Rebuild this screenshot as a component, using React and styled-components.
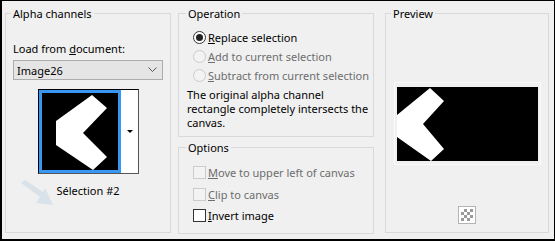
import React from 'react';
import styled, { createGlobalStyle } from 'styled-components';

const GlobalStyle = createGlobalStyle`
  body {
    margin: 0;
    background: #f0f0f0;
    font-family: "Noto Sans", "Open Sans", sans-serif;
    font-size: 11px;
    color: #000;
  }
`;

const Frame = styled.div`
  width: 555px;
  height: 241px;
  box-sizing: border-box;
  border-style: solid;
  border-color: #000;
  border-width: 1px 1px 2px 2px;
  background: #f0f0f0;
  padding: 5px 0 0 3px;
  display: flex;
  align-items: flex-start;
`;

const Column = styled.div`
  display: flex;
  flex-direction: column;
  gap: 3px;
  margin-left: ${p => p.$left || 0}px;
`;

const Group = styled.fieldset`
  box-sizing: border-box;
  margin: 0 0 0 ${p => p.$left || 0}px;
  min-width: 0;
  width: ${p => p.$w}px;
  height: ${p => p.$h}px;
  border: 1px solid #d9d9d9;
  padding: 0 7px;
  position: relative;
`;

const Legend = styled.legend`
  padding: 0 2px;
  margin-left: ${p => p.$offset || 0}px;
  line-height: 15px;
`;

const Stack = styled.div`
  display: flex;
  flex-direction: column;
  align-items: ${p => p.$center ? 'center' : 'stretch'};
  padding-top: ${p => p.$top || 0}px;
`;

const FieldLabel = styled.div`
  line-height: 15px;
`;

const Select = styled.div`
  margin-top: 4px;
  height: 20px;
  box-sizing: border-box;
  border: 1px solid #acacac;
  background: #e5e5e5;
  display: flex;
  align-items: center;
  justify-content: space-between;
  padding: 0 5px 0 3px;
  line-height: 15px;
`;

const ThumbFrame = styled.div`
  margin: 9px 0 0 25px;
  width: 101px;
  height: 85px;
  box-sizing: border-box;
  border: 1px solid #555;
  border-color: #000 #555 #555 #000;
  display: flex;
`;

const ThumbImage = styled.div`
  width: 82px;
  height: 83px;
  box-sizing: border-box;
  border: 3px solid #3797f2;
  background: #000;
  display: flex;
`;

const DropButton = styled.div`
  flex: 1;
  background: #fff;
  display: flex;
  align-items: center;
  justify-content: center;
`;

const Triangle = styled.div`
  width: 0;
  height: 0;
  border-left: 3px solid transparent;
  border-right: 3px solid transparent;
  border-top: 3px solid #000;
`;

const Caption = styled.div`
  margin-top: 9px;
  line-height: 15px;
  text-align: center;
`;

const Pointer = styled.svg`
  position: absolute;
  left: 13px;
  top: 158px;
`;

const Row = styled.div`
  height: ${p => p.$h}px;
  display: flex;
  align-items: center;
  margin-left: 7px;
  line-height: 15px;
  white-space: nowrap;
  color: ${p => p.$disabled ? '#6d6d6d' : '#000'};
`;

const Radio = styled.span`
  flex: none;
  width: 13px;
  height: 13px;
  box-sizing: border-box;
  border-radius: 50%;
  border: 1px solid ${p => p.$disabled ? '#cbcbcb' : '#333'};
  background: ${p => p.$disabled ? '#f3f3f3' : '#fff'};
  margin-right: 2px;
  display: flex;
  align-items: center;
  justify-content: center;
  &::after {
    content: '';
    display: ${p => p.$checked ? 'block' : 'none'};
    width: 7px;
    height: 7px;
    border-radius: 50%;
    background: #222;
  }
`;

const Check = styled.span`
  flex: none;
  width: 13px;
  height: 13px;
  box-sizing: border-box;
  border: 1px solid ${p => p.$disabled ? '#cbcbcb' : '#333'};
  background: ${p => p.$disabled ? '#f3f3f3' : '#fff'};
  margin-right: 2px;
`;

const Note = styled.p`
  margin: 3px 0 0 1px;
  line-height: 14px;
  white-space: nowrap;
`;

const PreviewFrame = styled.div`
  margin-top: 61px;
  border: 1px solid #fbfbfb;
  padding: 4px 2px 3px 2px;
  display: flex;
`;

const PreviewImage = styled.div`
  width: 141px;
  height: 74px;
  background: #000;
  display: flex;
`;

const Checker = styled.div`
  margin-top: 41px;
  width: 18px;
  height: 18px;
  box-sizing: border-box;
  border: 1px solid #b4b4b4;
  padding: 2px;
  background: #fff;
  &::before {
    content: '';
    display: block;
    width: 12px;
    height: 12px;
    background: repeating-conic-gradient(#9a9a9a 0 25%, #fff 0 50%) 0 0 / 6px 6px;
  }
`;

const Chevron = ({ w, h, points }) => (
  <svg width={w} height={h} viewBox={`0 0 ${w} ${h}`}>
    <polygon points={points} fill="#fff" />
  </svg>
);

const App = () => (
  <>
    <GlobalStyle />
    <Frame>
      <Group $w={166} $h={227}>
        <Legend $offset={-2}>Alpha channels</Legend>
        <Stack $top={20}>
          <FieldLabel>Load from <u>d</u>ocument:</FieldLabel>
          <Select>
            <span>Image26</span>
            <svg width="9" height="6" viewBox="0 0 9 6">
              <polyline points="0.5,0.5 4.5,4.5 8.5,0.5" fill="none" stroke="#555" strokeWidth="1" />
            </svg>
          </Select>
          <ThumbFrame>
            <ThumbImage>
              <Chevron w={76} h={77} points="50,2 65,15 41,40 65,64 51,77 14,52 14,28" />
            </ThumbImage>
            <DropButton>
              <Triangle />
            </DropButton>
          </ThumbFrame>
          <Caption>Sélection #2</Caption>
        </Stack>
        <Pointer width="36" height="28" viewBox="0 0 36 28">
          <g fill="#d3dde7" opacity="0.8">
            <polygon points="2,4 6,1 24,13 26,9 34,26 17,24 21,18" />
          </g>
        </Pointer>
      </Group>

      <Column $left={7}>
        <Group $w={196} $h={131}>
          <Legend>Operation</Legend>
          <Stack $top={7}>
            <Row $h={19}>
              <Radio $checked />
              <span><u>R</u>eplace selection</span>
            </Row>
            <Row $h={19} $disabled>
              <Radio $disabled />
              <span><u>A</u>dd to current selection</span>
            </Row>
            <Row $h={19} $disabled>
              <Radio $disabled />
              <span><u>S</u>ubtract from current selection</span>
            </Row>
            <Note>
              The original alpha channel<br />
              rectangle completely intersects the<br />
              canvas.
            </Note>
          </Stack>
        </Group>
        <Group $w={196} $h={94}>
          <Legend>Options</Legend>
          <Stack $top={7}>
            <Row $h={21.5} $disabled>
              <Check $disabled />
              <span><u>M</u>ove to upper left of canvas</span>
            </Row>
            <Row $h={21.5} $disabled>
              <Check $disabled />
              <span><u>C</u>lip to canvas</span>
            </Row>
            <Row $h={21.5}>
              <Check />
              <span><u>I</u>nvert image</span>
            </Row>
          </Stack>
        </Group>
      </Column>

      <Group $w={164} $h={227} $left={11}>
        <Legend $offset={-2}>Preview</Legend>
        <Stack $center>
          <PreviewFrame>
            <PreviewImage>
              <Chevron w={141} h={74} points="33,1 47,14 26,37 47,62 34,74 0,50 0,28" />
            </PreviewImage>
          </PreviewFrame>
          <Checker />
        </Stack>
      </Group>
    </Frame>
  </>
);

export default App;
